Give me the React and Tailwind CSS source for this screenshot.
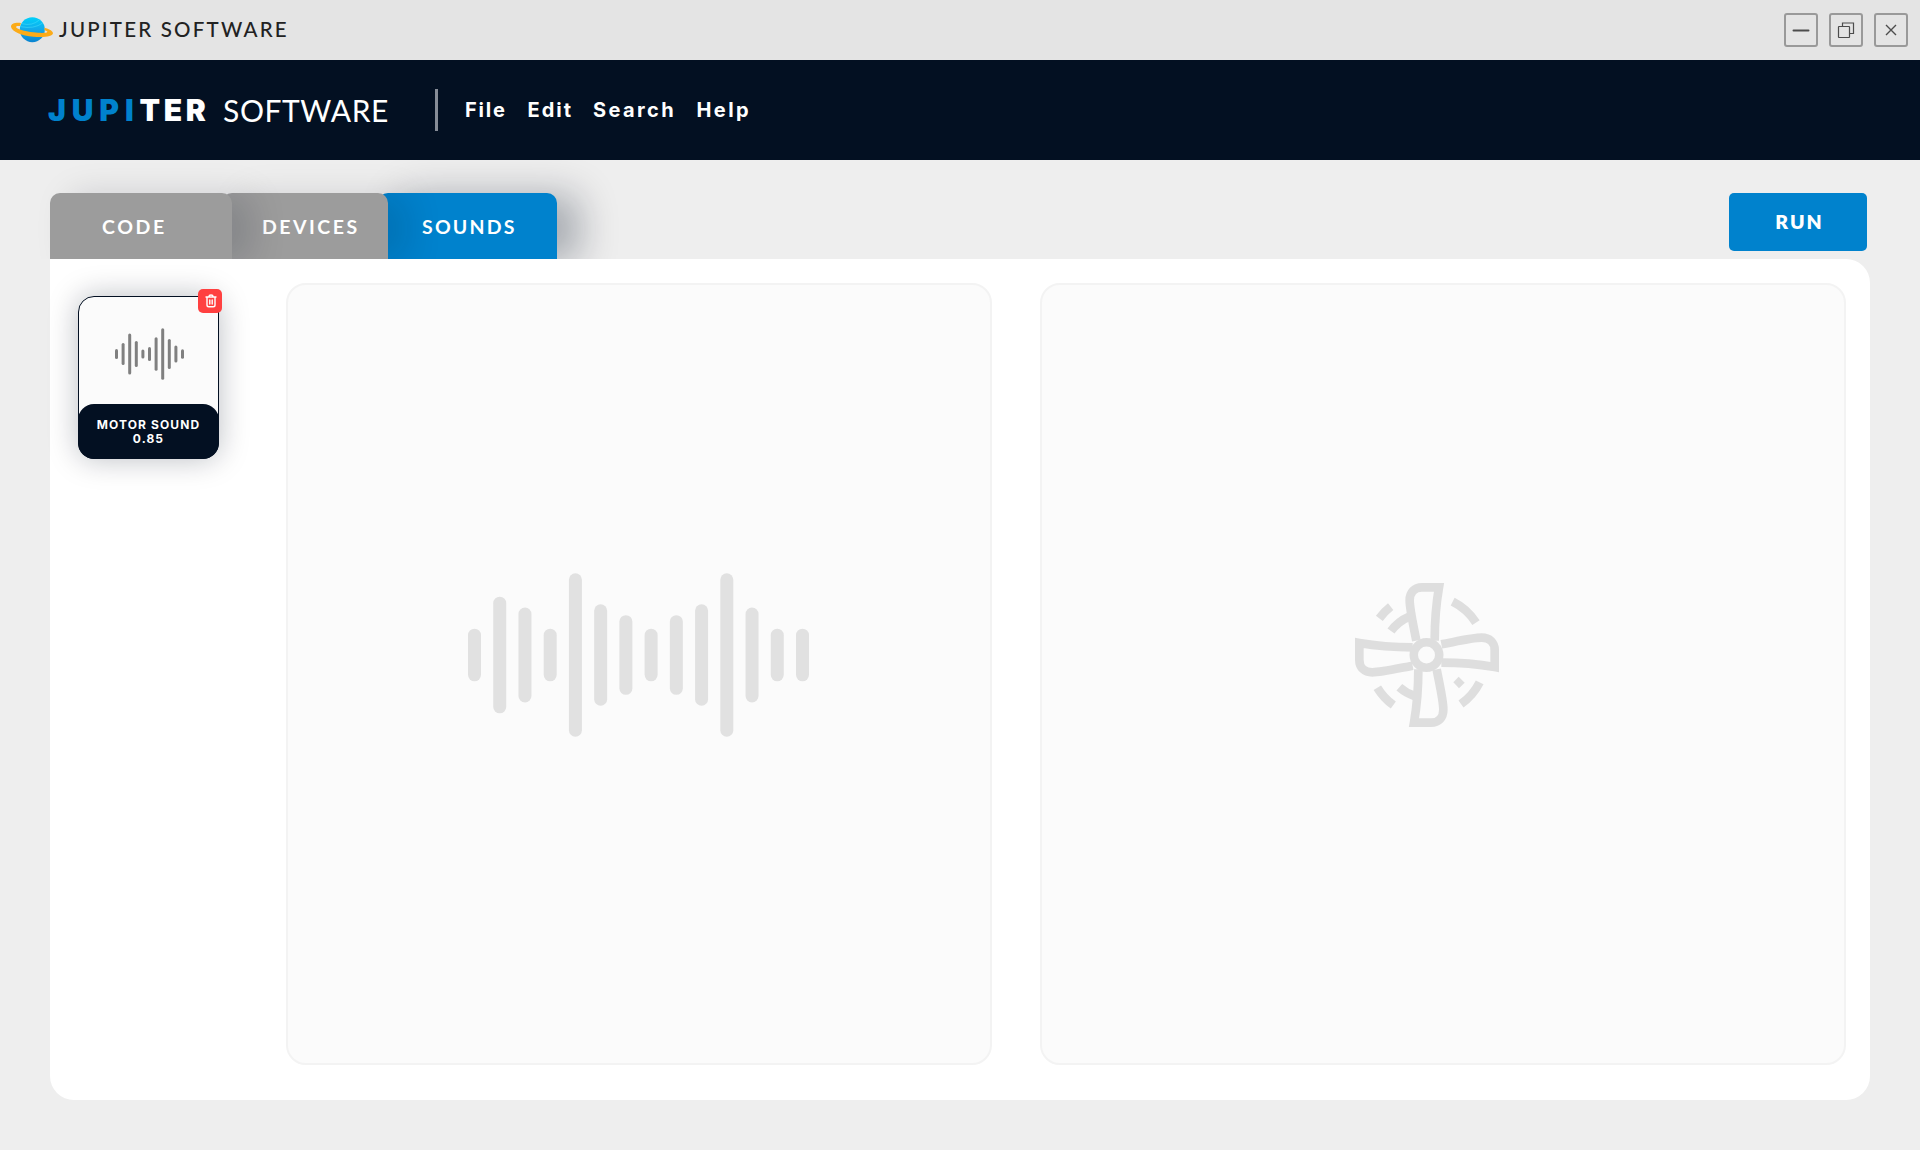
const menu = [
  { label: "File", cls: "w-[62.5px] tracking-[1.8px]" },
  { label: "Edit", cls: "w-[65.500px] tracking-[2px]" },
  { label: "Search", cls: "w-[103.500px] tracking-[2.4px]" },
  { label: "Help", cls: "tracking-[2.4px]" },
];

const bigWave = [52.7, 116.7, 95, 52.7, 163.3, 101.3, 79.7, 52.7, 79.7, 101.3, 163.3, 95, 52.7, 52.7];
const smallWave = [10, 22, 41, 26, 9, 14, 33.3, 51.3, 30, 17, 9.5];

function Wave({ heights, width, height, bar, color }) {
  const step = (width - bar) / (heights.length - 1);
  return (
    <svg width={width} height={height} viewBox={`0 0 ${width} ${height}`} fill={color}>
      {heights.map((h, i) => (
        <rect key={i} x={i * step} y={(height - h) / 2} width={bar} height={h} rx={bar / 2} />
      ))}
    </svg>
  );
}

function Planet() {
  return (
    <svg className="h-[26px] w-[42px] shrink-0" viewBox="33 50 126 78">
      <defs>
        <linearGradient id="planet" x1="0" y1="0" x2="0" y2="1">
          <stop offset="0" stopColor="#00d0fa" />
          <stop offset="0.5" stopColor="#12a9ea" />
          <stop offset="1" stopColor="#0a84d0" />
        </linearGradient>
      </defs>
      <circle cx="97" cy="88" r="37.5" fill="url(#planet)" />
      <path d="M66 70q30 8 52-11M62 79q40 8 66-11" stroke="#4fe0fb" strokeWidth="1.5" fill="none" />
      <path
        d="M63 68C44 66 33 71 33 79C35 94 66 106 100 109C134 112 159 108 159 98C158 91 148 86 133 82L134 90C140 92 143 94 142 95C139 98 124 99 101 96C73 93 49 85 48 80C48 77 53 76 60 77Z"
        fill="#fbab18"
      />
    </svg>
  );
}

function Fan() {
  const blade = "M229 212C219 160 209 118 209 91C209 67 224 52 246 52L297 52C288 104 284 150 284 212";
  return (
    <svg className="h-[144px] w-[144px]" viewBox="45 39 432 432" fill="none" stroke="#dedede" strokeWidth="26">
      <path d={blade} />
      <path d={blade} transform="rotate(90 261 255)" />
      <path d={blade} transform="rotate(180 259.5 255)" />
      <path d={blade} transform="rotate(270 261 255)" />
      <circle cx="259.5" cy="255" r="51" fill="#dedede" stroke="none" />
      <circle cx="259.5" cy="255" r="25.500" fill="#fbfbfb" stroke="none" />
      <path d="M338 95A177 177 0 0 1 408 158" />
      <path d="M118 145Q134 124 152 110" />
      <path d="M153 183A130 130 0 0 1 207 140" />
      <path d="M363 402A177 177 0 0 0 419 337" />
      <path d="M112 353A177 177 0 0 0 160 405" />
      <path d="M178 352A128 128 0 0 0 224 378" />
      <path d="M356 320L374 338L357 355L340 337Z" fill="#dedede" stroke="none" />
    </svg>
  );
}

function WindowButton({ children }) {
  return (
    <button className="flex h-[34px] w-[34px] items-center justify-center rounded-[3px] border-2 border-[#999999]">
      {children}
    </button>
  );
}

export default function App() {
  return (
    <div className="h-[1150px] w-[1920px] overflow-hidden bg-[#eeeeee] font-['Lato',sans-serif]">
      <div className="flex h-[60px] items-center justify-between bg-[#e4e4e4] pr-3 pl-[11px]">
        <div className="flex items-center">
          <Planet />
          <span className="ml-[6px] pb-[1px] text-[20.5px] leading-none font-medium tracking-[2.2px] text-[#222222]">
            JUPITER SOFTWARE
          </span>
        </div>
        <div className="flex gap-[11px]">
          <WindowButton>
            <svg width="18" height="18" viewBox="0 0 18 18" fill="none" stroke="#4c4c4c" strokeWidth="2" strokeLinecap="round">
              <path d="M1.500 9.500h15" />
            </svg>
          </WindowButton>
          <WindowButton>
            <svg width="18" height="18" viewBox="0 0 18 18" fill="none" stroke="#4c4c4c" strokeWidth="1.2">
              <rect x="1.5" y="5.500" width="11" height="11" rx="0.5" />
              <path d="M5.500 5.500v-3.500h11v10.500h-4" />
            </svg>
          </WindowButton>
          <WindowButton>
            <svg width="18" height="18" viewBox="0 0 18 18" fill="none" stroke="#4c4c4c" strokeWidth="1.4">
              <path d="M4 4l10 10M14 4l-10 10" />
            </svg>
          </WindowButton>
        </div>
      </div>

      <header className="flex h-[100px] items-center bg-[#031022] pl-12 text-white">
        <div className="flex w-[387px] items-center text-[30px] leading-none">
          <span className="w-[175px] font-['Inter',sans-serif] font-black">
            <span className="tracking-[5.9px] text-[#0082cd]">JUPI</span>
            <span className="tracking-[3.6px]">TER</span>
          </span>
          <span className="tracking-[0.6px]">SOFTWARE</span>
        </div>
        <div className="h-[42px] w-[3px] bg-[#868c97]" />
        <nav className="ml-[27px] flex font-['Inter',sans-serif] text-xl leading-none font-bold">
          {menu.map((m) => (
            <a key={m.label} className={m.cls}>{m.label}</a>
          ))}
        </nav>
      </header>

      <div className="flex h-[99px] items-start justify-between overflow-hidden pt-[33px] pr-[53px] pl-[50px] text-white">
        <div className="flex text-[19.5px] font-bold">
          <div className="z-30 flex h-[66px] w-[182px] items-center rounded-t-[10px] bg-[#9c9c9c] pt-[2px] pl-[52px] tracking-[2.6px] shadow-[20px_2px_34px_rgba(2,16,34,0.15)]">
            CODE
          </div>
          <div className="z-20 -ml-[10px] flex h-[66px] w-[166px] items-center rounded-t-[10px] bg-[#9c9c9c] pt-[2px] pl-[40px] tracking-[2.5px] shadow-[20px_2px_34px_rgba(2,16,34,0.13)]">
            DEVICES
          </div>
          <div className="z-10 -ml-[10px] flex h-[66px] w-[179px] items-center rounded-t-[10px] bg-[#0082cd] pt-[2px] pl-[44px] tracking-[2.2px] shadow-[22px_2px_38px_rgba(2,16,34,0.31)]">
            SOUNDS
          </div>
        </div>
        <button className="h-[58px] w-[138px] rounded-[5px] bg-[#0082cd] pl-[3px] text-[19.5px] font-extrabold tracking-[2.1px]">
          RUN
        </button>
      </div>

      <main className="ml-[50px] flex h-[841px] w-[1820px] rounded-3xl rounded-tl-none bg-white pt-6">
        <aside className="w-[236px] pt-[13px] pl-7">
          <div className="relative flex h-[163px] w-[141px] flex-col rounded-2xl border border-[#031022] bg-[#fbfbfb] shadow-[0_0_30px_rgba(2,16,34,0.27)]">
            <div className="flex flex-1 items-center justify-center pt-[6px] pl-px">
              <Wave heights={smallWave} width={69} height={52} bar={3} color="#808080" />
            </div>
            <div className="-mx-px -mb-px flex h-[55px] flex-col items-center justify-center rounded-2xl bg-[#031022] text-center font-['Inter',sans-serif] text-xs leading-[14px] font-bold text-white">
              <span className="tracking-[1.1px]">MOTOR SOUND</span>
              <span className="tracking-[1.1px]">0.85</span>
            </div>
            <button className="absolute -top-2 -right-1 flex h-6 w-6 items-center justify-center rounded-[5px] bg-[#ff4040] pb-px pl-px">
              <svg width="12" height="14" viewBox="0 0 12 14" fill="none" stroke="#ffffff" strokeWidth="1.4" strokeLinecap="round" strokeLinejoin="round">
                <path d="M1 3h10M3.800 2.800Q4 1 6 1T8.200 2.800M2 3.200v7.800q0 1.800 1.800 1.800h4.400q1.800 0 1.800-1.800V3.200M4.800 6v4M7.200 6v4" />
              </svg>
            </button>
          </div>
        </aside>
        <section className="flex h-[782px] w-[706px] items-center justify-center rounded-[20px] border-2 border-[#f3f3f3] bg-[#fbfbfb] pr-[2px] pb-[37.500px]">
          <Wave heights={bigWave} width={341} height={164} bar={13} color="#e1e1e1" />
        </section>
        <section className="ml-12 flex h-[782px] w-[806px] items-center justify-center rounded-[20px] border-2 border-[#f3f3f3] bg-[#fbfbfb] pr-8 pb-[38px]">
          <Fan />
        </section>
      </main>
    </div>
  );
}
